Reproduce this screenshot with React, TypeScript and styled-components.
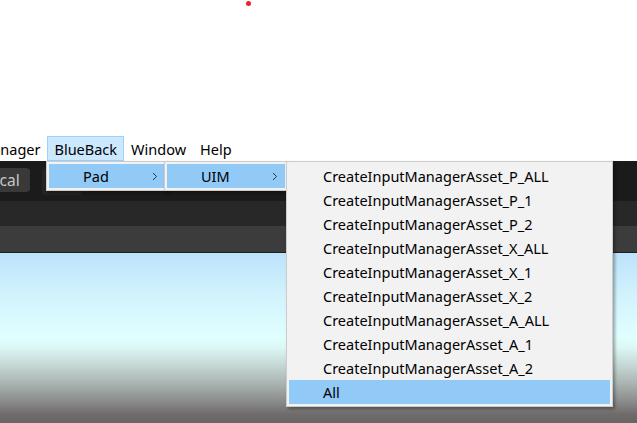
import React from 'react';
import styled, { createGlobalStyle } from 'styled-components';

const GlobalStyle = createGlobalStyle`
  html, body {
    margin: 0;
    padding: 0;
    background: #ffffff;
  }
  body {
    font-family: "Noto Sans", "Open Sans", sans-serif;
  }
`;

const Screen = styled.div`
  position: relative;
  width: 637px;
  height: 423px;
  overflow: hidden;
  display: flex;
  flex-direction: column;
  background: #ffffff;
`;

const TopArea = styled.div`
  height: 136px;
  flex: none;
`;

const RecDot = styled.div`
  width: 5px;
  height: 5px;
  margin: 1px 0 0 246px;
  border-radius: 50%;
  background: #e3262b;
`;

const MenuBar = styled.div`
  height: 25px;
  flex: none;
  display: flex;
  margin-left: -28px;
`;

const MenuBarItem = styled.div<{ $active?: boolean }>`
  display: flex;
  align-items: center;
  padding: 0 6px;
  font-size: 14.5px;
  color: #000000;
  background: ${(p) => (p.$active ? '#cce8ff' : 'transparent')};
  border: 1px solid ${(p) => (p.$active ? '#99d1ff' : 'transparent')};
`;

const Editor = styled.div`
  flex: 1;
  display: flex;
  flex-direction: column;
`;

const Toolbar = styled.div`
  height: 40px;
  flex: none;
  display: flex;
  align-items: flex-start;
  padding-top: 7px;
  box-sizing: border-box;
  background: #1b1b1b;
`;

const ToolButton = styled.div<{ $dim?: boolean }>`
  height: ${(p) => (p.$dim ? '27px' : '24px')};
  width: ${(p) => (p.$dim ? '40px' : 'auto')};
  display: flex;
  align-items: center;
  padding: 0 10px;
  box-sizing: border-box;
  margin-left: ${(p) => (p.$dim ? '12px' : '-28px')};
  border-radius: 4px;
  background: ${(p) => (p.$dim ? '#242424' : '#393939')};
  color: #c8c8c8;
  font-size: 15.5px;
`;

const TabStrip = styled.div`
  height: 25px;
  flex: none;
  background: #282828;
`;

const SceneBar = styled.div`
  height: 26px;
  flex: none;
  background: #3c3c3c;
  border-bottom: 1px solid #1f1f1f;
`;

const SkyView = styled.div`
  flex: 1;
  background: linear-gradient(
    to bottom,
    #bde3fb 0%,
    #d2f3fd 25%,
    #e0ffff 50%,
    #dbf6f4 56%,
    #c3d4d1 67%,
    #a9b3b1 77%,
    #8b8d8c 87%,
    #6f6b6b 95%,
    #6a6565 100%
  );
`;

const Dropdown = styled.div<{ $left: number; $top: number; $width: number; $z: number }>`
  position: absolute;
  left: ${(p) => p.$left}px;
  top: ${(p) => p.$top}px;
  width: ${(p) => p.$width}px;
  z-index: ${(p) => p.$z};
  box-sizing: border-box;
  padding: 2px;
  background: #f2f2f2;
  border: 1px solid #cccccc;
  box-shadow: 2px 2px 3px rgba(0, 0, 0, 0.35);
`;

const MenuRow = styled.div<{ $hot?: boolean }>`
  height: 24px;
  display: flex;
  align-items: center;
  padding: 0 7px 0 34px;
  font-size: 14.5px;
  color: #000000;
  white-space: nowrap;
  background: ${(p) => (p.$hot ? '#91c9f7' : 'transparent')};
`;

const RowLabel = styled.span`
  flex: 1;
`;

const Chevron = () => (
  <svg width="6" height="9" viewBox="0 0 6 9">
    <polyline points="1,1 4.5,4.5 1,8" fill="none" stroke="#333333" strokeWidth="1" />
  </svg>
);

const items = [
  'CreateInputManagerAsset_P_ALL',
  'CreateInputManagerAsset_P_1',
  'CreateInputManagerAsset_P_2',
  'CreateInputManagerAsset_X_ALL',
  'CreateInputManagerAsset_X_1',
  'CreateInputManagerAsset_X_2',
  'CreateInputManagerAsset_A_ALL',
  'CreateInputManagerAsset_A_1',
  'CreateInputManagerAsset_A_2',
  'All',
];

export default function App() {
  return (
    <Screen>
      <GlobalStyle />
      <TopArea>
        <RecDot />
      </TopArea>
      <MenuBar>
        <MenuBarItem>Manager</MenuBarItem>
        <MenuBarItem $active>BlueBack</MenuBarItem>
        <MenuBarItem>Window</MenuBarItem>
        <MenuBarItem>Help</MenuBarItem>
      </MenuBar>
      <Editor>
        <Toolbar>
          <ToolButton>Local</ToolButton>
          <ToolButton $dim />
        </Toolbar>
        <TabStrip />
        <SceneBar />
        <SkyView />
      </Editor>

      <Dropdown $left={46} $top={161} $width={122} $z={1}>
        <MenuRow $hot>
          <RowLabel>Pad</RowLabel>
          <Chevron />
        </MenuRow>
      </Dropdown>
      <Dropdown $left={164} $top={161} $width={124} $z={2}>
        <MenuRow $hot>
          <RowLabel>UIM</RowLabel>
          <Chevron />
        </MenuRow>
      </Dropdown>
      <Dropdown $left={286} $top={161} $width={327} $z={3}>
        {items.map((label) => (
          <MenuRow key={label} $hot={label === 'All'}>
            <RowLabel>{label}</RowLabel>
          </MenuRow>
        ))}
      </Dropdown>
    </Screen>
  );
}
